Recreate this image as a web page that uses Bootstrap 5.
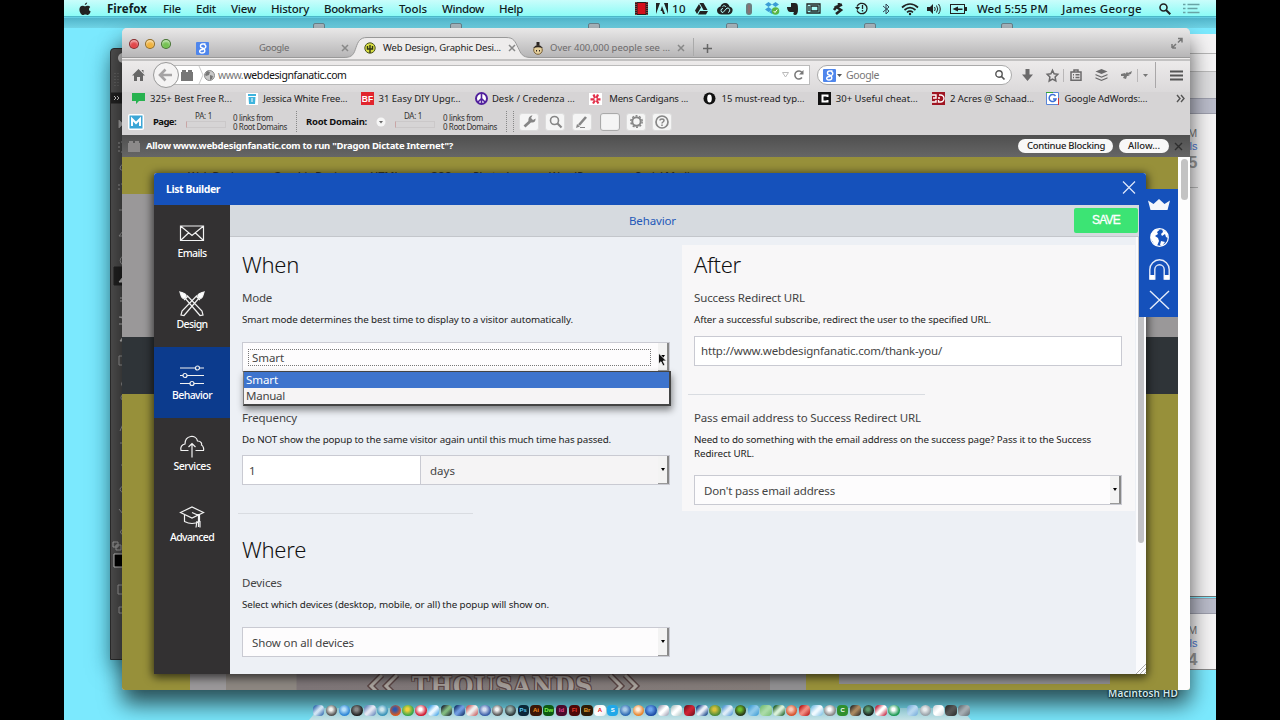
<!DOCTYPE html>
<html lang="en">
<head>
<meta charset="utf-8">
<meta name="viewport" content="width=device-width, initial-scale=1">
<title>List Builder</title>
<link href="https://cdn.jsdelivr.net/npm/bootstrap@5.3.0/dist/css/bootstrap.min.css" rel="stylesheet">
<style>
body{background:#000;overflow:hidden;font-family:"Open Sans","Noto Sans",sans-serif;color:#222;height:720px}
svg{display:block;overflow:visible}
[data-fit]{white-space:nowrap;display:inline-block;justify-self:start;flex:none}
.desk{width:1152px;height:720px;margin-left:64px;background:#7be9fe}
.mac{font-family:"Noto Sans","Open Sans",sans-serif}
/* menu bar */
.menubar{height:17px;background:linear-gradient(#c9fdfb,#8cfbf6);border-bottom:1px solid #4cb9c9;display:grid;align-items:center;font-size:11.5px;font-weight:500;line-height:17px;color:#10201f;
 grid-template-columns:15px 28px 56px 33px 35px 40px 53px 75px 43px 57px 136px 21px 16px 23px 22px 29px 19px 22px 19px 27px 22px 28px 19px 25px 23px 27px 85px 97px 24px 1fr;box-shadow:0 2px 4px #2a8da366}
.tops{left:0;top:18px;width:1152px;height:10px;background:linear-gradient(#51b4ca,#6fd3e5)}
.tops i{position:absolute;width:12px;height:6px;top:5px;background:#a9b6bd;border:1px solid #66828c;border-radius:2px 2px 0 0}
/* windows on the desktop */
.palette{left:46px;top:48px;width:30px;height:612px;background:#505050;border:1px solid #2d2d2d;border-radius:4px 0 0 0;box-shadow:0 8px 22px #0b4a5a99}
.back{left:1070px;width:82px;background:#f4f3f4;font-family:"Liberation Sans",sans-serif}
.back1{top:34px;height:563px;border-bottom:1px solid #777}
.back2{top:598px;height:72px;border-bottom:1px solid #888}
.back .stripe{height:16px;background:#b9bbc9;border:solid #9c9eac;border-width:1px 0}
.back .lbl{padding-left:54px;line-height:13px;font-size:11px;color:#777}
.back .blu{color:#4a78d4;padding-left:53px}
.back .num{font-size:17px;line-height:20px;color:#999;font-weight:bold}
.hd{left:1044px;top:686px;font-size:10px;line-height:14px;color:#cfe9ee;text-shadow:0 1px 2px #000,0 0 2px #000;font-weight:600}
.firefox{left:58px;top:28px;width:1068px;height:662px;border-radius:5px 5px 3px 3px;overflow:hidden;background:#d6d4d5}
.shade{left:58px;top:28px;width:1068px;height:662px;border-radius:5px;box-shadow:0 14px 22px 0 #000a}
.tabs{height:30px;background:linear-gradient(#e9e8e8,#b5b4b5);position:relative;font-size:9.5px;color:#6c6a6b}
.tabs>svg{position:absolute;left:0;top:0}
.tabrow{position:relative;display:grid;align-items:center;height:30px;padding-top:10px;padding-left:7px;
 grid-template-columns:16px 16px 35px 63px 83px 22px 19px 126px 23px 18px 128px 25px 468px 14px}
.light{width:10px;height:10px;border-radius:50%;margin-top:-9px;border:1px solid #0006;box-shadow:inset 0 2px 2px #fff8}
.navrow{height:34px;background:linear-gradient(#b9b7b8,#b9b7b8) 941px 11px/1px 13px no-repeat,linear-gradient(#b9b7b8,#b9b7b8) 1015px 11px/1px 13px no-repeat,linear-gradient(#a9a7a8,#a9a7a8) 1033px 4px/1px 26px no-repeat,linear-gradient(#eeecec,#dbd9da);display:grid;align-items:center;padding-left:10px;font-size:10.5px;
 grid-template-columns:22px 656px 7px 195px 15px 24px 24px 25px 25px 24px 20px 1fr}
.urlbar{height:20px;background:#fff;border:1px solid #bbb;border-left:0;margin-left:14px;position:relative}
.back-btn{position:absolute;left:-15px;top:-4px;width:26px;height:26px;border-radius:50%;background:#f4f3f3;border:1px solid #999}
.urlin{display:grid;align-items:center;height:18px;line-height:18px;padding-left:13px;grid-template-columns:17px 10px 10px 25.5px 535px 17px 1fr}
.searchbox{height:20px;border-radius:10px;background:#fff;border:1px solid #aaa;padding-left:5px;display:grid;align-items:center;line-height:18px;grid-template-columns:17px 7px 144px 12px}
.bmrow{height:13px;display:grid;align-items:center;font-size:9.5px;line-height:13px;padding-left:10px;color:#222;grid-template-columns:repeat(9,114.3px) 1fr}
.bmrow .item{display:grid;grid-template-columns:18px 1fr;align-items:center}
.mozrow{height:30px;display:grid;align-items:center;padding:3px 0 0 6px;font-size:8px;line-height:9px;color:#333;grid-template-columns:25px 33px 47px 63px 10px 70px 19px 48px 63px 7px 6px 26px 27px 28px 26px 26px 20px}
.mozrow .lbl{font-size:9.5px;font-weight:700;color:#111}
.mozrow .meter{width:40px;height:7px;border:1px solid #cbc8c9;border-left-color:#c9a5a5;margin-top:1px}
.mozrow .dots{border-left:1px dotted #888;height:21px;width:1px}
.mbtn{width:20px;height:18px;background:#f5f5f5;border:1px solid #dcdcdc;border-radius:3px;display:grid;place-items:center}
.notif{height:22px;background:linear-gradient(#4f4f4f,#666);color:#fff;font-size:9.5px;font-weight:700;line-height:22px;display:grid;align-items:center;padding-left:6px;grid-template-columns:18px 872px 101px 56px 1fr}
.pill{height:14px;border-radius:7px;background:#f8f8f8;color:#222;font-weight:500;line-height:14px;padding-left:9px}
/* page behind the popup */
.page{height:533px;position:relative;background:linear-gradient(#97903a 0 37px,#9a9899 37px 180px,#2f3438 180px 237px,#97903a 237px)}
.sitenav{height:17px;display:grid;padding:12px 0 0 66px;font-size:11px;line-height:14px;font-weight:500;color:#3e3a20;grid-template-columns:85px 97px 60px 43px 76px 86px 1fr}
.vscroll{position:absolute;right:0;top:0;width:12px;height:533px;background:#fdfdfd;padding:2px 2px}
.vscroll i{display:block;width:7px;height:41px;border-radius:4px;background:#c3c3c3;margin-left:1px}
.foot{position:absolute;left:68px;top:517px;height:16px;width:988px;overflow:hidden;display:grid;grid-template-columns:36px 544px 36px 33px 271px 1fr}
.foot .photo{background:linear-gradient(90deg,#8c8680 0,#8c8680 70px,#7d7577 71px,#837b78);overflow:hidden;position:relative}
.big{font-family:"DejaVu Serif Condensed","DejaVu Serif",serif;font-stretch:condensed;font-weight:700;font-size:26px;line-height:24px;color:#a39c97;text-shadow:1px 1px 0 #5a4645,-1px -1px 0 #5a4645,1px -1px 0 #5a4645,-1px 1px 0 #5a4645}
/* popup */
.popup{position:absolute;left:32px;top:16px;width:992px;height:501px;border-radius:3px 3px 0 0;overflow:hidden;background:#edf0f5}
.popshade{position:absolute;left:32px;top:16px;width:992px;height:501px;box-shadow:0 2px 9px 2px #0009;border-radius:3px}
.phead{height:32px;background:#1551bb;color:#fff;font-weight:700;font-size:10.5px;padding:0 11px 0 12px}
.side{width:76px;background:#333132;height:469px;flex:none}
.side .it{height:71px;color:#fff;font-size:10.5px;font-weight:500;line-height:14px;padding-top:16px}
.side .it svg{width:24px;height:24px;stroke:#f2f2f2;fill:none;stroke-width:1.2}
.side .it.on{background:#0c3b8d}
.ptop{height:32px;background:#d6dadf;border-bottom:1px solid #c3c6cb;display:grid;grid-template-columns:399px 445px 64px;align-items:center;font-size:11.5px;line-height:16px;color:#2358b8}
.save{background:#3ce474;color:#fff;height:25px;border-radius:2px;font:500 12px/25px "Liberation Sans",sans-serif;-webkit-text-stroke:.3px #fff;text-align:center;padding:0;border:0}
.pbody{height:437px;display:grid;grid-template-columns:452px 453px 1fr}
.colA{padding:12px 12px 0 12px}
.colB{margin-top:8px;height:266px;background:#f8f7f8;padding:4px 13px 0 12px}
.h-sec{font-size:22px;font-weight:300;line-height:30px;height:30px;margin:0;color:#111}
.lab{font-size:11.5px;line-height:18px;height:18px;color:#444;margin-top:10px}
.desc{font-size:9.8px;line-height:14px;height:14px;color:#222;margin-top:6px}
.fld{height:30px;border:1px solid #c9cad2;background:#fff;border-radius:0;font-size:11.5px;line-height:27px;color:#444;padding:0 9px;position:relative;display:flex;align-items:center}
.fld.sel{padding-right:0;justify-content:space-between;background:#fdfcfd}
.arr{width:11px;align-self:stretch;border-right:2px solid #888;border-bottom:1px solid #999;background:#f3f3f3;display:grid;place-items:center}
.arr:after{content:"";border:2.5px solid transparent;border-top:3.5px solid #000;border-bottom:0}
.rule{height:1px;background:#d9dce1;width:235px;margin-left:-4px}
.drop{position:absolute;left:0;right:-2px;top:28px;height:35px;border:1px solid #444;border-left-color:#777;border-right-width:2px;border-bottom-width:2px;background:#f6f4f5;box-shadow:1px 4px 7px #0007;line-height:16px;z-index:2}
.drop div{height:16px;padding-left:2px}
.drop .on{background:#3e74cd;color:#fff}
.focusbox{border:1px dotted #777;height:17px;line-height:15px;flex:1;margin:0 7px 0 -4px;padding-left:3px}
.psb{position:absolute;left:982px;top:64px;width:10px;height:437px;background:#fbfbfd}
.psb i{display:block;width:6px;height:306px;margin-left:2px;border-radius:0 0 3px 3px;background:#c2c2c5}
.tools{position:absolute;left:1017px;top:32px;width:39px;height:128px;background:#1551bb;display:grid;grid-template-rows:repeat(4,32px);place-items:center;padding-left:1px}
/* dock */
.dock{left:245px;top:702px;width:662px;height:18px}
.dock .shelf{position:absolute;inset:6px 0 0 0;background:linear-gradient(#9cc4cbaa,#c6e2e6);clip-path:polygon(10px 0,652px 0,662px 100%,0 100%)}
.dock .icons{position:relative;padding-left:4px;padding-top:3px}
.dk{width:11.4px;height:11.4px;margin-right:1.4px;flex:none;font:700 6px/11px "Liberation Sans",sans-serif;text-align:center;overflow:hidden}
.cursor{position:absolute;left:415px;top:9px;z-index:3}
</style>
</head>
<body>
<div class="desk position-relative overflow-hidden">
 <div class="menubar mac">
  <span></span>
  <svg width="12" height="14" viewBox="0 0 12 14"><path fill="#222" d="M8.2.6C8 2 7 3 5.800 3 5.800 1.700 6.900.800 8.200.600ZM3.500 3.700c1 0 1.700.6 2.500.6S7.700 3.600 9 3.700c.9.1 1.700.5 2.200 1.200-1.900 1.300-1.600 3.800.5 4.700C11 11.400 10 13 8.800 13c-.9 0-1.300-.5-2.400-.5S4.900 13 4 13C2.200 13 .4 9.900.4 7.400c0-2.300 1.400-3.700 3.100-3.700Z"/></svg>
  <b data-fit="40">Firefox</b><span data-fit="18">File</span><span data-fit="20">Edit</span><span data-fit="25">View</span><span data-fit="38">History</span><span data-fit="59">Bookmarks</span><span data-fit="28">Tools</span><span data-fit="42">Window</span><span data-fit="24">Help</span>
  <svg width="13" height="13"><path fill="#222" d="M0 0h13v13H0z"/><path fill="#d3101c" d="M2.500 1h8v11h-8z"/><path stroke="#e55" stroke-dasharray="1 1" d="M1 0v13M12 0v13"/></svg>
  <svg width="12" height="11"><path fill="#222" d="M0 0h4L0 11zM12 0H8l4 11zM6 3l3 8H7L6 8H4.500z"/></svg>
  <span data-fit="14">10</span>
  <svg width="13" height="12"><path fill="#222" d="M4.500 0h4l4 7H8.500zM4 1l2 3.500L2 11 0 7.500zM5 8h8l-2 3.500H3z"/></svg>
  <svg width="16" height="12"><path fill="#222" d="M8 0c3 0 4 2 4.500 3.500C15 4 16 6 15.500 8c-.5 2-2 3.500-4 3.500h-7C2 11.500 0 10 0 7.500 0 5.500 1.500 4 3.500 3.500 4 1.500 6 0 8 0Z"/><path fill="none" stroke="#b5fbf8" d="M6 5.500a2 2 0 1 0 0 4l4-4.500a2.200 2.200 0 1 1 1 4.500M5.500 3.500C7 2 8.500 3 9 4"/></svg>
  <svg width="7" height="12"><rect width="6" height="12" rx="3" fill="#6d7d7f"/><path stroke="#a66" d="M3 2v8"/></svg>
  <svg width="14" height="13"><path fill="#3b9dd6" d="M3.500 0 7 2.500 3.500 5 0 2.500zM10.500 0 14 2.500 10.500 5 7 2.500zM3.500 5 7 7.500 3.500 10 0 7.500zM7 8l3 2-3 2-3-2z"/><circle cx="10.500" cy="9" r="3.800" fill="#5bb543"/><path fill="none" stroke="#fff" d="m8.700 9 1.300 1.500 2.200-3"/></svg>
  <svg width="11" height="12"><path fill="#222" d="M4 0h4c3 0 3 3 3 6 0 4-1 6-3 6-2 0-2-2-1-3H3C1 9 0 6 0 4h4z"/></svg>
  <svg width="15" height="11"><path fill="none" stroke="#222" stroke-width="1.300" d="M1 1h13v9H1zM3 3v5M5 3h7v5H5z"/></svg>
  <svg width="10" height="12"><path fill="none" stroke="#222" stroke-width="2.600" d="M9 1.500 3.500 4l4.500 3-5 4M1 7l3-4M6 0v3"/></svg>
  <svg width="14" height="13"><path fill="none" stroke="#222" stroke-width="1.300" d="M2 8.500a5.200 5.200 0 1 0 0-4M7.500 3v4"/><path fill="#222" d="M0 5h5L2.500 8zM6.800 8h1.400v1.500H6.800z"/></svg>
  <svg width="7" height="12"><path fill="none" stroke="#345" d="m0 3 6 5-3 3V1l3 3-6 5"/></svg>
  <svg width="16" height="12"><path fill="none" stroke="#222" stroke-width="1.700" d="M0 4.500c5-4.500 11-4.500 16 0M2.500 7c3.500-3 7.500-3 11 0M5 9.300c2-1.600 4-1.600 6 0"/><circle cx="8" cy="11" r="1.200" fill="#222"/></svg>
  <svg width="14" height="12"><path fill="#222" d="M0 4h3l3-3v10L3 8H0z"/><path fill="none" stroke="#222" d="M7.500 4q1.500 2 0 4M9.500 2.500q2.500 3.500 0 7M11.500 1q3.500 5 0 10"/></svg>
  <svg width="17" height="10"><rect x=".5" y=".5" width="14" height="9" fill="none" stroke="#222"/><path fill="#222" d="M15 3h2v4h-2zM2.500 5 8 2.500v2h4.500v1.500H8v1.500z"/></svg>
  <span data-fit="71">Wed 5:55 PM</span><span data-fit="80">James George</span>
  <svg width="12" height="12"><circle cx="4.500" cy="4.500" r="3.500" fill="none" stroke="#222" stroke-width="1.600"/><path stroke="#222" stroke-width="2" d="m7 7 4.300 4.300"/></svg>
  <svg width="17" height="12"><path stroke="#68a3a5" stroke-width="1.600" d="M0 1.500h2.500M0 5.500h2.500M0 9.500h2.500M4.500 1.500h12M4.500 5.500h10M4.500 9.500h12"/></svg>
 </div>
 <div class="tops position-absolute"><i style="left:249px"></i><i style="left:386px"></i><i style="left:524px"></i><i style="left:662px"></i><i style="left:800px"></i><i style="left:937px"></i></div>

 <div class="palette position-absolute">
  <svg width="12" height="610" fill="none" stroke="#a5a5a5"><circle cx="12" cy="9" r="5" fill="#ccc" stroke="none"/><path stroke="#777" stroke-dasharray="1 2" d="M4 24v15M7 24v15"/><path stroke="#222" stroke-width="11" d="M0 49h12"/><path stroke="#ddd" d="m3 47 2 2-2 2M6 47l2 2-2 2"/><path fill="#bbb" d="m8 71 4 4-4 4z"/><path stroke-dasharray="2 2" d="M12 93H8v10h4M12 135H8v8"/><path d="M12 115a5 5 0 0 0-3 5l3 2M12 157v8M8 161h4M8 187l4-5v5zM12 207a5 5 0 0 0 0 9"/><path fill="#222" stroke="#222" d="M3 218h9v18H3z"/><path stroke="#ccc" fill="#ccc" d="m8 233 4-5v5zM9 249h3M9 252h3M8 268h4v2M8 275h4M9 292l3-4v4z"/><path d="M12 307H8v9h4M12 331q-3 4 0 8M12 345q-4 4 0 7M9 382l3-7v7M9 394h3M10 416h2M12 437q-6 3 0 7M8 460l4 5M12 480q-5 3 0 6M2 493h5v5H2zM5 496h5v5H5z"/><path fill="#000" stroke="#ccc" d="M12 505H3v13h9"/><path d="M12 536H7v9h5M12 558H8v6h4"/></svg>
 </div>
 <div class="back back1 position-absolute mac"><div style="height:20px;border-bottom:1px solid #b5b5b5"></div><div style="height:17px"></div><div style="height:27px;background:#dcdcde;border-top:1px solid #b9b9b9"></div><div class="stripe"></div><div class="lbl" style="padding-top:13px">M</div><div class="lbl blu">ils</div><div class="lbl num">5</div><div style="height:15px;border-bottom:1px solid #bbb;width:64px"></div></div>
 <div class="back back2 position-absolute"><div class="stripe"></div><div class="lbl" style="padding-top:10px">M</div><div class="lbl blu">ils</div><div class="lbl num">4</div></div>
 <div class="shade position-absolute"></div>
 <div class="hd position-absolute mac"><span data-fit="70">Macintosh HD</span></div>

 <div class="firefox position-absolute mac">
  <div class="tabs">
   <svg width="1068" height="30"><path fill="#eeecec" stroke="#999" d="M-2 29.500H222c9 0 10-4 12-10s4-10 11-10H384c8 0 9 4 12 10s4 10 13 10H1070V32H-2z"/><path stroke="#aaa" d="M571.500 10v18"/></svg>
   <div class="tabrow">
    <span class="light" style="background:#e2474b"></span><span class="light" style="background:#f0b33f"></span><span class="light" style="background:#76c254"></span>
    <svg width="13" height="13"><rect width="13" height="13" rx="1" fill="#4f86ec"/><path fill="none" stroke="#fff" stroke-width="1.400" d="M9.500 2H6.500a2 2 0 1 0 0 4 2 2 0 1 0 1.500-3.500M6 6.500c4 .5 3.500 4.500 0 4.500s-3-3.500 1-3.500"/></svg>
    <span data-fit="30">Google</span>
    <svg width="6" height="6"><path stroke="#888" stroke-width="1.500" d="m0 0 6 6M6 0 0 6"/></svg>
    <svg width="12" height="12"><circle cx="6" cy="6" r="5.200" fill="#d8dd42" stroke="#4b5420"/><path fill="none" stroke="#2e3414" stroke-width="1.400" d="M6 11V3M3.500 4v3h5V4"/></svg>
    <span data-fit="118" style="color:#222">Web Design, Graphic Desi...</span>
    <svg width="6" height="6"><path stroke="#888" stroke-width="1.500" d="m0 0 6 6M6 0 0 6"/></svg>
    <svg width="12" height="13"><circle cx="6" cy="8" r="4.300" fill="#e5cf9c" stroke="#7b6238"/><path fill="#2b2522" d="M1 6q5-6 10 0-5-1.500-10 0M4.500 0h3v3h-3zM4 8h1v1.500H4zM7 8h1v1.500H7z"/></svg>
    <span data-fit="120">Over 400,000 people see ...</span>
    <svg width="6" height="6"><path stroke="#888" stroke-width="1.500" d="m0 0 6 6M6 0 0 6"/></svg>
    <svg width="9" height="9"><path stroke="#666" stroke-width="1.500" d="M4.500 0v9M0 4.500h9"/></svg>
    <svg width="12" height="12" style="margin-top:-11px"><path fill="none" stroke="#777" stroke-width="1.500" d="M7 1.500h4v4M11 1.500 7 5.500M1 11V7M1 11h4M1 11l4-4"/></svg>
   </div>
  </div>
  <div class="navrow">
   <svg width="13" height="12"><path fill="#666" d="M6.500 0 13 6.500h-2V12H8V8H5v4H2V6.500H0zM9.500 1h2v3z"/></svg>
   <div class="urlbar"><div class="back-btn"><svg width="24" height="24"><path fill="none" stroke="#a5a3a4" stroke-width="2.600" d="M6.500 12H18M11.500 6.500 6 12l5.500 5.500"/></svg></div>
    <div class="urlin">
     <svg width="12" height="11"><path fill="#777" d="M0 2h1V0h4v2h2V0h4v2h1v9H0z"/></svg>
     <svg width="6" height="18"><path fill="none" stroke="#ccc" d="m1 0 4 9-4 9"/></svg>
     <svg width="11" height="11" style="margin-left:-4px"><circle cx="5.500" cy="5.500" r="5" fill="#c9c9c9" stroke="#8c8c8c"/><path fill="#777" d="M3 1l3 1-1 3-3 1-1-1zM6 5l3 1-1 3-2 1z"/></svg>
     <span data-fit="25" style="color:#777">www.</span><span data-fit="103" style="color:#111">webdesignfanatic.com</span>
     <svg width="7" height="6" style="margin-left:3px"><path fill="none" stroke="#bbb" d="M.5.500h6L3.500 5z"/></svg>
     <svg width="10" height="10" style="margin-left:-2px"><path fill="none" stroke="#777" stroke-width="1.500" d="M8 7.500A4 4 0 1 1 8 2.500"/><path fill="#777" d="M9.500 0v4.500H5z"/></svg>
    </div></div>
   <span></span>
   <div class="searchbox">
    <svg width="13" height="13"><rect width="13" height="13" rx="1" fill="#4f86ec"/><path fill="none" stroke="#fff" stroke-width="1.400" d="M9.500 2H6.500a2 2 0 1 0 0 4 2 2 0 1 0 1.500-3.500M6 6.500c4 .5 3.500 4.500 0 4.500s-3-3.500 1-3.500"/></svg>
    <svg width="5" height="3" style="margin-left:-3px"><path fill="#555" d="M0 0h5L2.500 3z"/></svg><span data-fit="33" style="color:#777;margin-left:-1px">Google</span>
    <svg width="10" height="10" style="margin-left:4px"><circle cx="4" cy="4" r="3.200" fill="none" stroke="#555" stroke-width="1.400"/><path stroke="#555" stroke-width="1.700" d="m6.500 6.500 3 3"/></svg>
   </div>
   <span></span>
   <svg width="11" height="12" style="margin-left:-5px"><path fill="#6b6a6b" d="M3.500 0h4v5.500H11L5.500 12 0 5.500h3.500z"/></svg>
   <svg width="13" height="13" style="margin-left:-5px"><path fill="none" stroke="#6b6a6b" stroke-width="1.500" d="m6.500 1.300 1.600 3.500 3.700.5-2.700 2.700.7 3.900-3.300-1.900L3.200 12l.7-4L1.200 5.300l3.700-.5z"/></svg>
   <svg width="12" height="12" style="margin-left:-5px"><path fill="none" stroke="#6b6a6b" stroke-width="1.500" d="M1 3h10v8.300H1zM3 5.800h1M5.500 5.800h4M3 8.500h1M5.500 8.500h4M4 3V1h4v2"/></svg>
   <svg width="13" height="12" style="margin-left:-5px"><path fill="#6b6a6b" d="m6.500 0 6 2.500-6 2.500-6-2.500zM.5 5l6 2.500 6-2.500v1.300l-6 2.500-6-2.500zM.5 8.300l6 2.500 6-2.500v1.200l-6 2.500-6-2.500z"/></svg>
   <svg width="11" height="9" style="margin-left:-4px"><path fill="#777" d="M0 3 4 2v1L6 1l1 1 4-2-1 3-3 1 2 1-3 0-1 3-3-1 1-2H0z"/></svg>
   <svg width="5" height="3" style="margin-left:-6px"><path fill="#777" d="M0 0h5L2.500 3z"/></svg>
   <svg width="13" height="11" style="margin-left:1px"><path stroke="#555" stroke-width="2.200" d="M0 1.500h13M0 5.500h13M0 9.500h13"/></svg>
  </div>
  <div class="bmrow">
   <div class="item"><svg width="13" height="11"><path fill="#27b24f" d="M0 0h13v8H7l-3 3V8H0z"/></svg><span data-fit="82">325+ Best Free R...</span></div>
   <div class="item"><svg width="12" height="12"><path fill="#fff" d="M0 0h12v12H0z"/><path fill="#3fb4dd" d="M2 1h8v2H2zM2.500 4h7l-.5 7H3z"/><path stroke="#fff" d="M6 5v4"/></svg><span data-fit="84" style="margin-left:-1px">Jessica White Free...</span></div>
   <div class="item"><svg width="13" height="13"><path fill="#e1252d" d="M0 0h13v13H0z"/><text x="6.500" y="9.800" text-anchor="middle" font-family="Liberation Sans" font-weight="700" font-size="8.500" fill="#fff">BF</text></svg><span data-fit="82">31 Easy DIY Upgr...</span></div>
   <div class="item"><svg width="13" height="13"><circle cx="6.500" cy="6.500" r="5.500" fill="#fff" stroke="#51209c" stroke-width="2"/><path stroke="#51209c" stroke-width="1.600" d="M6.500 1v11M6.500 6.500l-4 4M6.500 6.500l4 4"/></svg><span data-fit="83" style="margin-left:-1px">Desk / Credenza ...</span></div>
   <div class="item"><svg width="13" height="12"><path fill="#fff" d="M0 0h13v12H0z"/><path stroke="#e2304a" stroke-width="2.200" d="M4.500 1.500 6 5M9 1.500 7.500 5M1.500 6.300H5.500M7.500 6.300h4M4 10.500 6 7.500M9.500 10.500 7.500 7.500"/></svg><span data-fit="79" style="margin-left:2px">Mens Cardigans ...</span></div>
   <div class="item"><svg width="13" height="13"><circle cx="6.500" cy="6.500" r="6" fill="#111"/><ellipse cx="6.500" cy="6.500" rx="2.300" ry="4" fill="#fff"/></svg><span data-fit="83">15 must-read typ...</span></div>
   <div class="item"><svg width="13" height="13"><path fill="#111" d="M0 0h13v13H0z"/><path fill="none" stroke="#fff" stroke-width="2" d="M9.500 5V3.500h-5v6h5V8"/></svg><span data-fit="82">30+ Useful cheat...</span></div>
   <div class="item"><svg width="13" height="13"><path fill="#a01522" d="M0 0h13v13H0z"/><path fill="none" stroke="#fff" stroke-width="1.400" d="M0 3h4v3H1M0 10h4V8M6 6h2M7 3h1.500a3.500 3.500 0 0 1 0 7H6.500V8"/></svg><span data-fit="84">2 Acres @ Schaad...</span></div>
   <div class="item"><svg width="13" height="13"><path fill="#fff" stroke="#5a86d8" d="M.5.500h12v12H.5z"/><path stroke="#d33" d="M12.500 6v7"/><path stroke="#3a3" d="M0 .5h7"/><path fill="none" stroke="#3d6fd6" stroke-width="1.500" d="M9.500 4a3.500 3.500 0 1 0 .5 3H7"/></svg><span data-fit="83">Google AdWords:...</span></div>
   <svg width="9" height="7" style="margin-left:15px"><path fill="none" stroke="#555" stroke-width="1.400" d="m1 0 3 3.500-3 3.500M5 0l3 3.500L5 7"/></svg>
  </div>
  <div class="mozrow">
   <svg width="16" height="16"><rect width="16" height="16" rx="2" fill="#fff"/><path fill="#3ba6d6" d="M1.500 1.500h13v13h-13z"/><path fill="none" stroke="#fff" stroke-width="2" d="M4 12V5l4 4 4-4v7"/></svg>
   <span class="lbl" data-fit="23">Page:</span>
   <div style="margin-top:-5px"><div style="padding-left:9px"><span data-fit="17">PA: 1</span></div><div class="meter"></div></div>
   <div><span data-fit="40">0 links from</span><br><span data-fit="54">0 Root Domains</span></div>
   <i class="dots"></i>
   <span class="lbl" data-fit="61">Root Domain:</span>
   <svg width="10" height="10"><circle cx="5" cy="5" r="4.500" fill="#f6f6f6"/><path fill="#666" d="M3 4h4L5 6.500z"/></svg>
   <div style="margin-top:-5px"><div style="padding-left:9px"><span data-fit="18">DA: 1</span></div><div class="meter"></div></div>
   <div><span data-fit="40">0 links from</span><br><span data-fit="54">0 Root Domains</span></div>
   <i class="dots"></i><i class="dots"></i>
   <div class="mbtn"><svg width="13" height="13"><path stroke="#868686" stroke-width="2.800" d="m1.500 11.500 5.500-5"/><path fill="#868686" d="M9.500.5 8 3l2 2 2.500-1.500C13 6 11 8 8.500 7.500 6 8 5 6 5.500 4 6 1.500 8 0 9.500.500Z"/></svg></div>
   <div class="mbtn"><svg width="13" height="13"><circle cx="5.500" cy="5.500" r="4" fill="none" stroke="#868686" stroke-width="1.600"/><path stroke="#868686" stroke-width="2.200" d="m8.500 8.500 4 4"/></svg></div>
   <div class="mbtn"><svg width="12" height="12"><path stroke="#868686" stroke-width="2.600" d="m3 9 7-8"/><path fill="#868686" d="m1 8 3 2.500L0 12zM4 11h5v1H4z"/></svg></div>
   <div class="mbtn" style="border-color:#aaa;box-shadow:inset 0 0 0 1px #eee"></div>
   <div class="mbtn"><svg width="13" height="13"><circle cx="6.500" cy="6.500" r="4.200" fill="none" stroke="#868686" stroke-width="2"/><circle cx="6.500" cy="6.500" r="5.700" fill="none" stroke="#868686" stroke-width="1.500" stroke-dasharray="2 1.600"/></svg></div>
   <div class="mbtn"><svg width="14" height="14"><circle cx="7" cy="7" r="6" fill="none" stroke="#868686" stroke-width="1.700"/><path fill="none" stroke="#868686" stroke-width="1.500" d="M5 5.500C5 3.500 9 3.500 9 5.500 9 7 7 7 7 8.500M7 9.500V11"/></svg></div>
  </div>
  <div class="notif">
   <svg width="12" height="11"><path fill="#8b8989" d="M0 2h1V0h4v2h2V0h4v2h1v9H0z"/></svg>
   <span data-fit="307">Allow www.webdesignfanatic.com to run "Dragon Dictate Internet"?</span>
   <div class="pill" style="width:95px"><span data-fit="78">Continue Blocking</span></div>
   <div class="pill" style="width:50px"><span data-fit="32">Allow...</span></div>
   <svg width="7" height="7"><path stroke="#2e2e2e" stroke-width="1.400" d="m0 0 7 7M7 0 0 7"/></svg>
  </div>
  <div class="page">
   <div class="sitenav"><span data-fit="58">Web Design</span><span data-fit="77">Graphic Design</span><span data-fit="30">HTML</span><span data-fit="22">CSS</span><span data-fit="52">Photoshop</span><span data-fit="56">WordPress</span><span data-fit="60">Social Media</span></div>
   <div class="vscroll"><i></i></div>
   <div class="foot"><span style="background:#9a9799"></span>
    <div class="photo big d-flex">
     <svg width="34" height="16" style="margin-left:142px;flex:none"><g fill="none"><path stroke="#5a4645" stroke-width="6" d="M14 1 3 12l6 6M29 1 18 12l6 6"/><path stroke="#a8a29c" stroke-width="3" d="M14 1 3 12l6 6M29 1 18 12l6 6"/></g></svg>
     <span style="margin-left:10px" data-fit="181">THOUSANDS</span>
     <svg width="34" height="16" style="margin-left:13px;flex:none"><g fill="none"><path stroke="#5a4645" stroke-width="6" d="m4 1 11 11-6 6M19 1l11 11-6 6"/><path stroke="#a8a29c" stroke-width="3" d="m4 1 11 11-6 6M19 1l11 11-6 6"/></g></svg>
    </div>
    <span style="background:#8f8e90"></span><span></span><span style="background:#8f8e90;height:10px"></span></div>
   <div class="popshade"></div>
   <div class="popup">
    <div class="phead d-flex align-items-center justify-content-between"><span data-fit="54" style="margin-top:1px">List Builder</span>
     <svg width="12" height="12"><path stroke="#dfe8fa" stroke-width="1.200" d="m0 0 12 12M12 0 0 12" transform="translate(0 -1.500)"/></svg></div>
    <div class="d-flex">
     <nav class="side">
      <div class="it d-flex flex-column align-items-center"><svg><path d="M.5 5h23v14.500H.5zM.5 5 12 14.500 23.500 5M.5 19.500l8.500-8M23.500 19.500l-8.500-8"/></svg><span style="margin-top:1px" data-fit="29">Emails</span></div>
      <div class="it d-flex flex-column align-items-center"><svg><path d="M4.500 5.500 20 23.500l3-.5-1-4L7 3.500M19.500 5.500 4 23.500 1 23l1-4L17 3.500M4 8l4-4M20 8l-4-4"/><path fill="#fff" d="M0 0c3 1 5 1 6 3 1 2-2 4-3.500 3C1 5 1 3 0 0ZM24 0c-3 1-5 1-6 3-1 2 2 4 3.500 3C23 5 23 3 24 0Z"/></svg><span style="margin-top:1px" data-fit="31">Design</span></div>
      <div class="it on d-flex flex-column align-items-center"><svg><path d="M0 5h15.500M19.500 5H24M0 12.500h3M7 12.500h17M0 20.500h10M14 20.500h10"/><circle cx="17.500" cy="5" r="2"/><circle cx="5" cy="12.500" r="2"/><circle cx="12" cy="20.500" r="2"/></svg><span style="margin-top:1px" data-fit="40">Behavior</span></div>
      <div class="it d-flex flex-column align-items-center"><svg><path d="M8.500 16.500H1C0 13 2 10.500 5 10 5 1 16 0 17.500 7c4 0 4.500 3 4 4 2 1 2.500 4 2 5.500h-8M12 23.500V9.500M8.500 13 12 9.500l3.500 3.500"/></svg><span style="margin-top:1px" data-fit="37">Services</span></div>
      <div class="it d-flex flex-column align-items-center"><svg><path d="M.5 7.500 12 2l11.500 5.500L12 13zM4.500 10v6.500q7.500 4 15 0V10M12 7.500l6.500 3V22M17 16l-1 6.500M20 16v6.500"/></svg><span style="margin-top:1px" data-fit="44">Advanced</span></div>
     </nav>
     <div class="flex-grow-1">
      <div class="ptop"><span></span><span data-fit="47">Behavior</span><button class="save"><span data-fit="28">SAVE</span></button></div>
      <div class="pbody">
       <section class="colA">
        <h2 class="h-sec"><span data-fit="57">When</span></h2>
        <div class="lab"><span data-fit="30">Mode</span></div>
        <div class="desc"><span data-fit="331">Smart mode determines the best time to display to a visitor automatically.</span></div>
        <div class="fld sel" style="margin-top:15px"><div class="focusbox"><span data-fit="32">Smart</span></div><i class="arr"></i>
         <div class="drop"><div class="on"><span data-fit="32">Smart</span></div><div><span data-fit="39">Manual</span></div></div>
         <svg class="cursor" width="9" height="14"><path fill="#111" stroke="#fff" stroke-width=".8" d="M.5 1v11l2.500-2.300L5 14l2-1-2-4h3.500z"/></svg>
        </div>
        <div class="lab" style="margin-top:37px"><span data-fit="55">Frequency</span></div>
        <div class="desc"><span data-fit="369">Do NOT show the popup to the same visitor again until this much time has passed.</span></div>
        <div class="d-flex" style="margin-top:8px"><div class="fld" style="width:179px;padding-left:6px">1</div><div class="fld sel flex-grow-1" style="margin-left:-1px;background:#f5f4f5"><span data-fit="25">days</span><i class="arr"></i></div></div>
        <div class="rule" style="margin-top:28px"></div>
        <h2 class="h-sec" style="margin-top:20px"><span data-fit="64">Where</span></h2>
        <div class="lab"><span data-fit="40">Devices</span></div>
        <div class="desc"><span data-fit="307">Select which devices (desktop, mobile, or all) the popup will show on.</span></div>
        <div class="fld sel" style="margin-top:15px"><span data-fit="102">Show on all devices</span><i class="arr"></i></div>
       </section>
       <section class="colB">
        <h2 class="h-sec"><span data-fit="47">After</span></h2>
        <div class="lab"><span data-fit="111">Success Redirect URL</span></div>
        <div class="desc"><span data-fit="297">After a successful subscribe, redirect the user to the specified URL.</span></div>
        <div class="fld" style="margin-top:9px;padding-left:6px"><span data-fit="241" style="margin-top:-2px">http://www.webdesignfanatic.com/thank-you/</span></div>
        <div class="rule" style="margin-top:28px;margin-left:-6px;width:237px"></div>
        <div class="lab" style="margin-top:14px"><span data-fit="227">Pass email address to Success Redirect URL</span></div>
        <div class="desc" style="height:27px;line-height:13.5px"><span data-fit="397">Need to do something with the email address on the success page? Pass it to the Success</span><br><span data-fit="60">Redirect URL.</span></div>
        <div class="fld sel" style="margin-top:15px"><span data-fit="131">Don't pass email address</span><i class="arr"></i></div>
       </section>
      </div>
     </div>
    </div>
    <div class="psb"><i></i></div>
    <svg class="position-absolute bottom-0 end-0" width="10" height="10"><path stroke="#aaa" d="m0 10 10-10M4 10l6-6M8 10l2-2"/></svg>
   </div>
   <div class="tools">
    <svg width="22" height="12"><path fill="#f4f6fb" d="M0 1.500 5.500 5 11 0l5.500 5L22 1.500 19.500 11h-17z"/></svg>
    <svg width="19" height="19"><circle cx="9.500" cy="9.500" r="8.800" fill="#1551bb" stroke="#fff" stroke-width="1.200"/><path fill="#fff" d="M1 6 5 1l5 .5L7 4l1 2-3 2 3 2 1 3-2 5-3-2-3-5zM12 1l5 4 1 5-2-1-1-3-3 2-1-2 2-2zM11 13l4 1-3 4-2-1z"/></svg>
    <svg width="21" height="21"><path fill="none" stroke="#e4ebfa" stroke-width="1.400" d="M.8 20V10.500a9.700 9.700 0 0 1 19.400 0V20h-5V10.500a4.700 4.700 0 0 0-9.400 0V20z"/><path fill="#fff" d="M.8 16h5v4.500h-5zM15.200 16h5v4.500h-5z"/></svg>
    <svg width="19" height="18"><path stroke="#e4ebfa" stroke-width="1.400" d="m0 0 19 18M19 0 0 18" transform="translate(0 -1)"/></svg>
   </div>
  </div>
 </div>

 <div class="dock position-absolute"><div class="shelf"></div><div class="icons d-flex" id="dock"></div></div>
</div>
<script src="https://cdn.jsdelivr.net/npm/bootstrap@5.3.0/dist/js/bootstrap.bundle.min.js"></script>
<script>
/* dock items: edge colour, centre colour, shape (r = round), label, label colour */
const dock = [
 ['#3f74b5','#cfe2f2',''],['#555','#f2f2ee','r'],['#2f86d6','#b8e0fa','r'],['#222','#888','r'],['#6f8fc0','#e3e6f2',''],['#3a93b8','#cfe7ee','r'],
 ['#d8571f','#2a57b0','r'],['#3aa64b','#f2d23a','r'],['#d21f35','#fff','r'],['#4fa9e8','#eaf6ff',''],['#27313a','#7fb87e',''],['#1d3c74','#6f9be0',''],['#c66','#eee',''],
 ['#3b5fa8','#d7dff2','r'],['#555','#f2f2f2','r'],['#2f3a3c','#9fb6b2','r'],['#0b2738','#0b2738','','Ps','#57c7f5'],['#3a1606','#3a1606','','Ai','#f28b1e'],
 ['#0d5a12','#0d5a12','','Dw','#7cf04a'],['#4a0a2c','#4a0a2c','','Id','#e0458f'],['#4d0808','#4d0808','','Fl','#e23a2b'],['#2c1a06','#2c1a06','','Br','#e59a2a'],
 ['#eee','#fff','','A','#d11'],['#21a8e8','#21a8e8','','S','#fff'],['#2d6ab3','#a9cbe8','r'],['#e8852e','#fff0df','r'],['#1f4fa8','#6ca5ee','r'],
 ['#aab','#fff',''],['#bcc','#fff',''],['#7c1320','#c23',''],['#1f4b8c','#e8eef8',''],['#4d8b3a','#d9c13a','r'],['#5e9fd8','#dcebf7',''],
 ['#2a3a1a','#6fc12e','r'],['#4aa3d8','#8cc8ea',''],['#7fc27c','#a9dba6',''],['#2f6b35','#d9f0d8',''],['#d8542e','#f7c9b8','r'],['#c0201f','#f08a7e',''],
 ['#8cc7e8','#f0f9ff',''],['#888','#fff','r'],['#2f8f2e','#2f8f2e','','C','#fff'],['#3b3630','#a7865e',''],['#1c2420','#5a9a6c','r'],['#c8304a','#fff',''],
 ['#1f9a55','#fff','r'],null,['#7fb2dd','#b6d7f0',''],['#9aa3aa','#e9ecee','r'],['#d6dde2','#fff',''],['#333','#555',''],['#6d767c','#a3abb0','']];
document.getElementById('dock').innerHTML = dock.map(d => {
 if (!d) return '<span style="width:7px"></span>';
 const fill = d[2] ? `radial-gradient(circle at 45% 40%,${d[1]} 15%,${d[0]} 65%)` : `linear-gradient(135deg,${d[0]} 15%,${d[1]} 45% 55%,${d[0]} 90%)`;
 return `<span class="dk ${d[2] ? 'rounded-circle' : 'rounded-1'}" style="background:${fill};color:${d[4] || '#fff'}">${d[3] || ''}</span>`;
}).join('');
/* track every label so that it fills the width given for it */
document.querySelectorAll('[data-fit]').forEach(e => {
 const w = e.getBoundingClientRect().width, n = e.textContent.length;
 e.style.letterSpacing = ((+e.dataset.fit - w) / n).toFixed(3) + 'px';
});
</script>
</body>
</html>
